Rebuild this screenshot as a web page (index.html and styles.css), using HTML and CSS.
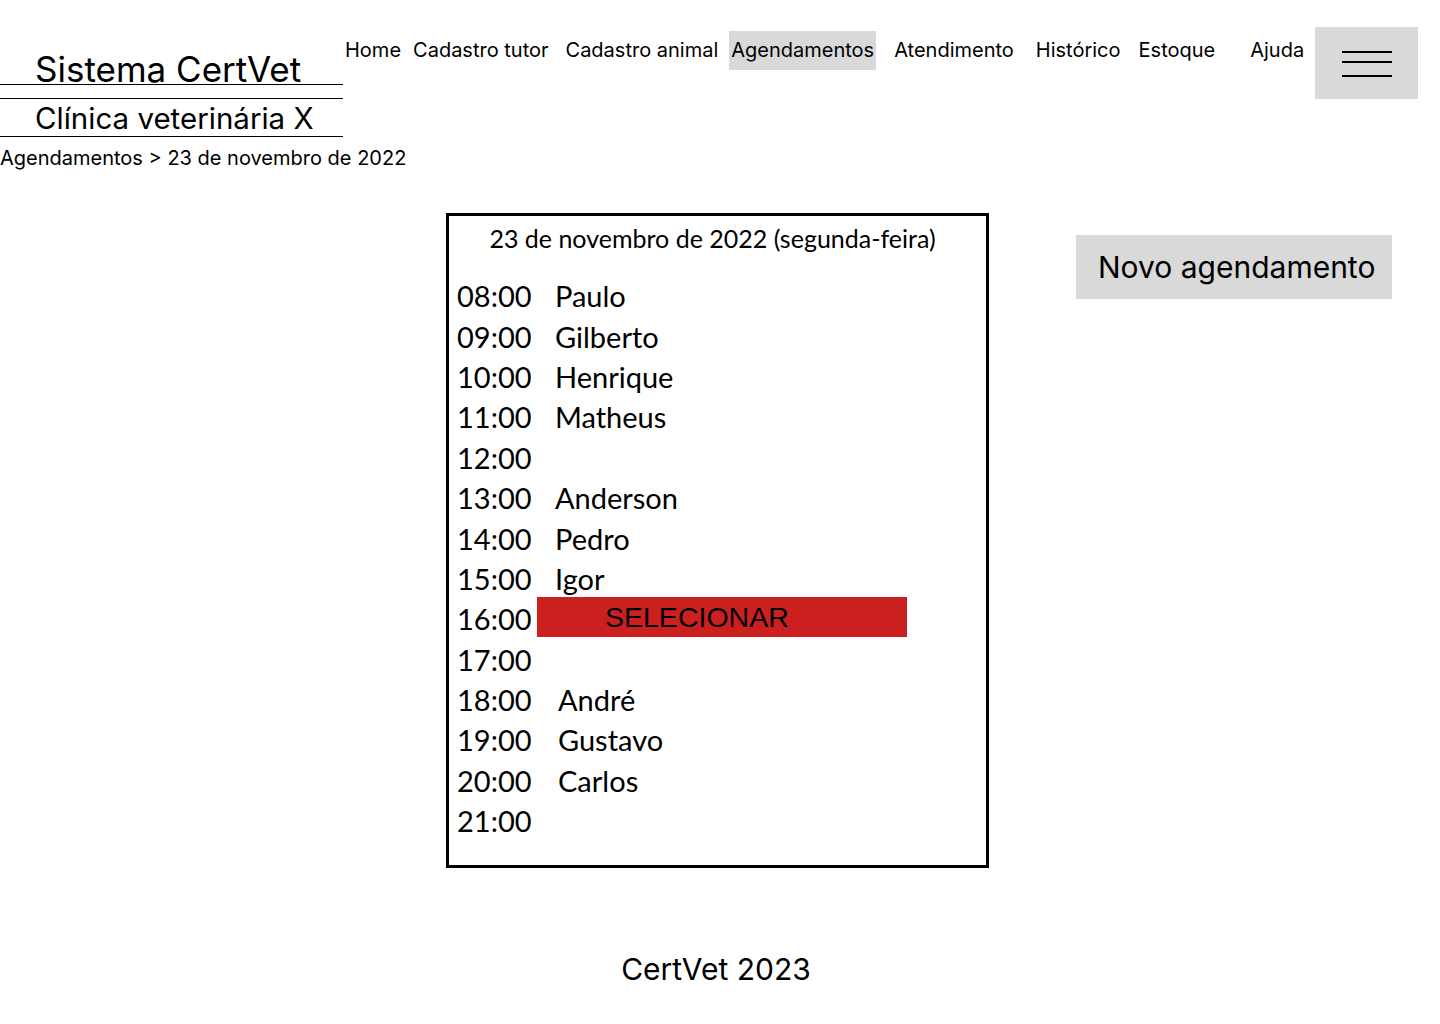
FILE: index.html
```html
<!DOCTYPE html>
<html lang="pt-BR">
<head>
<meta charset="utf-8">
<title>Sistema CertVet - Agendamentos</title>
<link rel="stylesheet" href="styles.css">
</head>
<body>
<header class="topbar">
  <div class="brand">
    <h1 class="brand-title">Sistema CertVet</h1>
    <h2 class="brand-clinic">Clínica veterinária X</h2>
    <p class="crumbs">Agendamentos &gt; 23 de novembro de 2022</p>
  </div>
  <nav class="nav">
    <a class="nav-link nav-home" href="#">Home</a>
    <a class="nav-link nav-tutor" href="#">Cadastro tutor</a>
    <a class="nav-link nav-animal" href="#">Cadastro animal</a>
    <a class="nav-link nav-agenda is-active" href="#">Agendamentos</a>
    <a class="nav-link nav-atend" href="#">Atendimento</a>
    <a class="nav-link nav-hist" href="#">Histórico</a>
    <a class="nav-link nav-estoque" href="#">Estoque</a>
    <a class="nav-link nav-ajuda" href="#">Ajuda</a>
  </nav>
  <button class="menu-btn" type="button" aria-label="Menu">
    <span class="menu-line"></span>
    <span class="menu-line menu-line-2"></span>
    <span class="menu-line menu-line-3"></span>
  </button>
</header>

<main class="content">
  <section class="schedule">
    <div class="schedule-date">23 de novembro de 2022 (segunda-feira)</div>
    <ul class="slots">
      <li class="slot"><span class="slot-time">08:00</span><span class="slot-name">Paulo</span></li>
      <li class="slot"><span class="slot-time">09:00</span><span class="slot-name">Gilberto</span></li>
      <li class="slot"><span class="slot-time">10:00</span><span class="slot-name">Henrique</span></li>
      <li class="slot"><span class="slot-time">11:00</span><span class="slot-name">Matheus</span></li>
      <li class="slot"><span class="slot-time">12:00</span><span class="slot-name"></span></li>
      <li class="slot"><span class="slot-time">13:00</span><span class="slot-name">Anderson</span></li>
      <li class="slot"><span class="slot-time">14:00</span><span class="slot-name">Pedro</span></li>
      <li class="slot"><span class="slot-time">15:00</span><span class="slot-name">Igor</span></li>
      <li class="slot"><span class="slot-time">16:00</span><span class="slot-select">SELECIONAR</span></li>
      <li class="slot"><span class="slot-time">17:00</span><span class="slot-name"></span></li>
      <li class="slot slot-late"><span class="slot-time">18:00</span><span class="slot-name">André</span></li>
      <li class="slot slot-late"><span class="slot-time">19:00</span><span class="slot-name">Gustavo</span></li>
      <li class="slot slot-late"><span class="slot-time">20:00</span><span class="slot-name">Carlos</span></li>
      <li class="slot"><span class="slot-time">21:00</span><span class="slot-name"></span></li>
    </ul>
  </section>
  <button class="new-btn" type="button">Novo agendamento</button>
</main>

<footer class="footer">CertVet 2023</footer>
</body>
</html>
```

FILE: styles.css
```css
* { box-sizing: border-box; }

html, body {
  margin: 0;
  padding: 0;
  background: #ffffff;
  color: #000000;
  font-family: Inter, "Noto Sans", sans-serif;
}

a { color: inherit; text-decoration: none; }

button {
  font-family: inherit;
  color: inherit;
  border: 0;
  cursor: pointer;
}

/* ---------- header ---------- */
.topbar {
  display: flex;
  align-items: flex-start;
  height: 180px;
}

.brand {
  width: 343px;
  flex: none;
}

.brand-title {
  margin: 54px 0 0;
  padding-left: 35px;
  font-size: 35px;
  font-weight: 400;
  line-height: 30px;
  white-space: nowrap;
  border-bottom: 1px solid #000;
}

.brand-clinic {
  margin: 13px 0 0;
  padding: 2px 0 0 35px;
  font-size: 29.5px;
  font-weight: 400;
  line-height: 35px;
  white-space: nowrap;
  border-top: 1px solid #000;
  border-bottom: 1px solid #000;
}

.crumbs {
  margin: 9px 0 0;
  font-size: 20px;
  line-height: 24px;
  white-space: nowrap;
}

.nav {
  display: flex;
  align-items: flex-start;
  margin-top: 31px;
}

.nav-link {
  font-size: 20px;
  line-height: 24px;
  padding: 7px 2px 8px;
  white-space: nowrap;
}

.nav-home { margin-left: 0; }
.nav-tutor { margin-left: 8px; }
.nav-animal { margin-left: 13px; }
.nav-agenda { margin-left: 9px; }
.nav-atend { margin-left: 16px; }
.nav-hist { margin-left: 18px; }
.nav-estoque { margin-left: 14px; }
.nav-ajuda { margin-left: 31px; }

.nav-link.is-active {
  background: #d9d9d9;
}

.menu-btn {
  margin: 27px 22px 0 auto;
  width: 103px;
  height: 72px;
  background: #d9d9d9;
  padding: 24px 0 0;
  display: flex;
  flex-direction: column;
  align-items: center;
}

.menu-line {
  display: block;
  width: 50px;
  height: 2px;
  background: #000;
}

.menu-line-2 { margin-top: 8px; }
.menu-line-3 { margin-top: 12px; }

/* ---------- main ---------- */
.content {
  display: flex;
  align-items: flex-start;
  margin-top: 33px;
}

.schedule {
  margin-left: 446px;
  width: 543px;
  height: 655px;
  border: 3px solid #000;
  flex: none;
  font-family: Lato, "Open Sans", sans-serif;
}

.schedule-date {
  padding: 7px 10px 0 0;
  font-size: 25px;
  line-height: 30px;
  text-align: center;
  white-space: nowrap;
}

.slots {
  list-style: none;
  margin: 23px 0 0;
  padding: 0 0 0 8px;
}

.slot {
  display: flex;
  align-items: center;
  height: 40.4px;
  font-size: 29px;
  line-height: 40px;
}

.slot-time {
  width: 80px;
  flex: none;
}

.slot-name {
  padding-left: 18px;
}

.slot-late .slot-name {
  padding-left: 21px;
}

.slot-select {
  width: 370px;
  height: 40px;
  margin-top: -4px;
  padding-left: 68px;
  background: #cc2020;
  font-family: "Liberation Sans", Arial, sans-serif;
  font-size: 28.5px;
  line-height: 40px;
}

.new-btn {
  margin: 22px 0 0 87px;
  width: 316px;
  height: 64px;
  padding: 0 0 0 22px;
  background: #d9d9d9;
  font-size: 30px;
  line-height: 64px;
  text-align: left;
  white-space: nowrap;
  flex: none;
}

/* ---------- footer ---------- */
.footer {
  margin-top: 83px;
  padding-right: 8px;
  text-align: center;
  font-size: 30px;
  line-height: 36px;
}
```
